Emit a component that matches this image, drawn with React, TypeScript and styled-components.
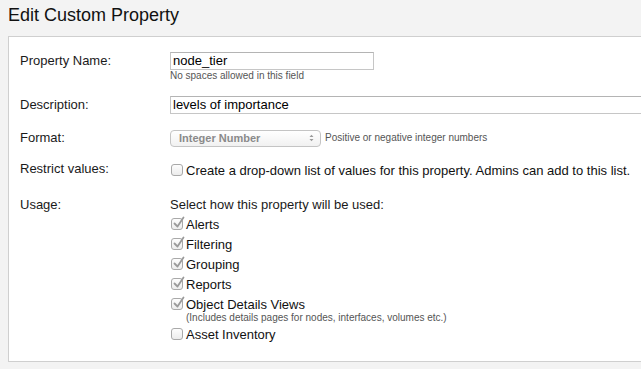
import React from "react";
import styled, { createGlobalStyle } from "styled-components";

const GlobalStyle = createGlobalStyle`
  html, body {
    margin: 0;
    padding: 0;
    background: #f3f3f3;
    overflow: hidden;
    font-family: "Liberation Sans", Arial, sans-serif;
    color: #1a1a1a;
  }
`;

const Page = styled.div`
  padding: 0 0 0 8px;
  width: 641px;
  height: 369px;
  box-sizing: border-box;
  overflow: hidden;
`;

const Title = styled.h1`
  margin: 0;
  padding-top: 4px;
  height: 32px;
  font-size: 18px;
  font-weight: normal;
  line-height: 22px;
  color: #111;
`;

// panel continues past the right edge of the window
const Panel = styled.div`
  margin-right: -40px;
  background: #fff;
  border: 1px solid #cfcfcf;
  border-right: none;
  padding: 15px 0 17px 11px;
`;

const Row = styled.div<{ $gap?: number }>`
  display: flex;
  align-items: flex-start;
  margin-bottom: ${({ $gap }) => $gap ?? 15}px;
  &:last-child {
    margin-bottom: 0;
  }
`;

const Label = styled.div`
  width: 150px;
  flex: none;
  font-size: 13px;
  line-height: 18px;
`;

const Field = styled.div`
  flex: 1;
  min-width: 0;
  font-size: 13px;
`;

const TextInput = styled.div<{ $wide?: boolean }>`
  width: ${({ $wide }) => ($wide ? "100%" : "204px")};
  height: 18px;
  box-sizing: border-box;
  border: 1px solid #c6c6c6;
  border-top-color: #b4b4b4;
  border-right-width: ${({ $wide }) => ($wide ? 0 : 1)}px;
  padding: 0 2px;
  font-size: 13px;
  line-height: 16px;
  color: #000;
  background: #fff;
`;

const Hint = styled.div<{ $indent?: number }>`
  font-size: 10px;
  line-height: 12px;
  color: #555;
  padding-left: ${({ $indent }) => $indent ?? 0}px;
`;

const SubHint = styled(Hint)`
  margin-top: -2px;
`;

const Inline = styled.div`
  display: flex;
  align-items: center;
  gap: 4px;
  height: 18px;
`;

const Select = styled.div`
  width: 151px;
  height: 17px;
  box-sizing: border-box;
  border: 1px solid #c4c4c4;
  border-radius: 4px;
  background: linear-gradient(#ffffff, #f1f1f1);
  display: flex;
  align-items: center;
  justify-content: space-between;
  padding: 0 6px 0 8px;
  font-size: 11px;
  font-weight: bold;
  color: #8a8a8a;
`;

const Arrows = styled.svg`
  width: 5px;
  height: 8px;
`;

const CheckRow = styled.label`
  display: flex;
  align-items: center;
  height: 20px;
  font-size: 13px;
  color: #111;
`;

const Box = styled.span`
  position: relative;
  width: 12px;
  height: 12px;
  box-sizing: border-box;
  border: 1px solid #a9a9a9;
  border-radius: 3px;
  background: linear-gradient(#fdfdfd, #ececec);
  margin: 0 3px 0 1px;
  flex: none;
`;

const Tick = styled.svg`
  position: absolute;
  left: 1px;
  top: -3px;
  width: 12px;
  height: 13px;
`;

const Check = ({ checked, children }: { checked?: boolean; children: React.ReactNode }) => (
  <CheckRow>
    <Box>
      {checked && (
        <Tick viewBox="0 0 12 13">
          <path d="M1.5 7.5 L4.5 10.5 L10.5 1.5" fill="none" stroke="#9a9a9a" strokeWidth="1.8" strokeLinecap="round" strokeLinejoin="round" />
        </Tick>
      )}
    </Box>
    {children}
  </CheckRow>
);

const UsageIntro = styled.div`
  line-height: 18px;
`;

const usages = ["Alerts", "Filtering", "Grouping", "Reports"];

export default function App() {
  return (
    <>
      <GlobalStyle />
      <Page>
        <Title>Edit Custom Property</Title>
        <Panel>
          <Row $gap={14}>
            <Label>Property Name:</Label>
            <Field>
              <TextInput>node_tier</TextInput>
              <Hint>No spaces allowed in this field</Hint>
            </Field>
          </Row>
          <Row $gap={15}>
            <Label>Description:</Label>
            <Field>
              <TextInput $wide>levels of importance</TextInput>
            </Field>
          </Row>
          <Row $gap={13}>
            <Label>Format:</Label>
            <Field>
              <Inline>
                <Select>
                  Integer Number
                  <Arrows viewBox="0 0 5 8">
                    <path d="M0.5 3 L2.5 0.8 L4.5 3 Z M0.5 5 L2.5 7.2 L4.5 5 Z" fill="#9a9a9a" />
                  </Arrows>
                </Select>
                <Hint>Positive or negative integer numbers</Hint>
              </Inline>
            </Field>
          </Row>
          <Row $gap={16}>
            <Label>Restrict values:</Label>
            <Field>
              <Check>Create a drop-down list of values for this property. Admins can add to this list.</Check>
            </Field>
          </Row>
          <Row>
            <Label>Usage:</Label>
            <Field>
              <UsageIntro>Select how this property will be used:</UsageIntro>
              {usages.map((u) => (
                <Check key={u} checked>
                  {u}
                </Check>
              ))}
              <Check checked>Object Details Views</Check>
              <SubHint $indent={16}>(Includes details pages for nodes, interfaces, volumes etc.)</SubHint>
              <Check>Asset Inventory</Check>
            </Field>
          </Row>
        </Panel>
      </Page>
    </>
  );
}
